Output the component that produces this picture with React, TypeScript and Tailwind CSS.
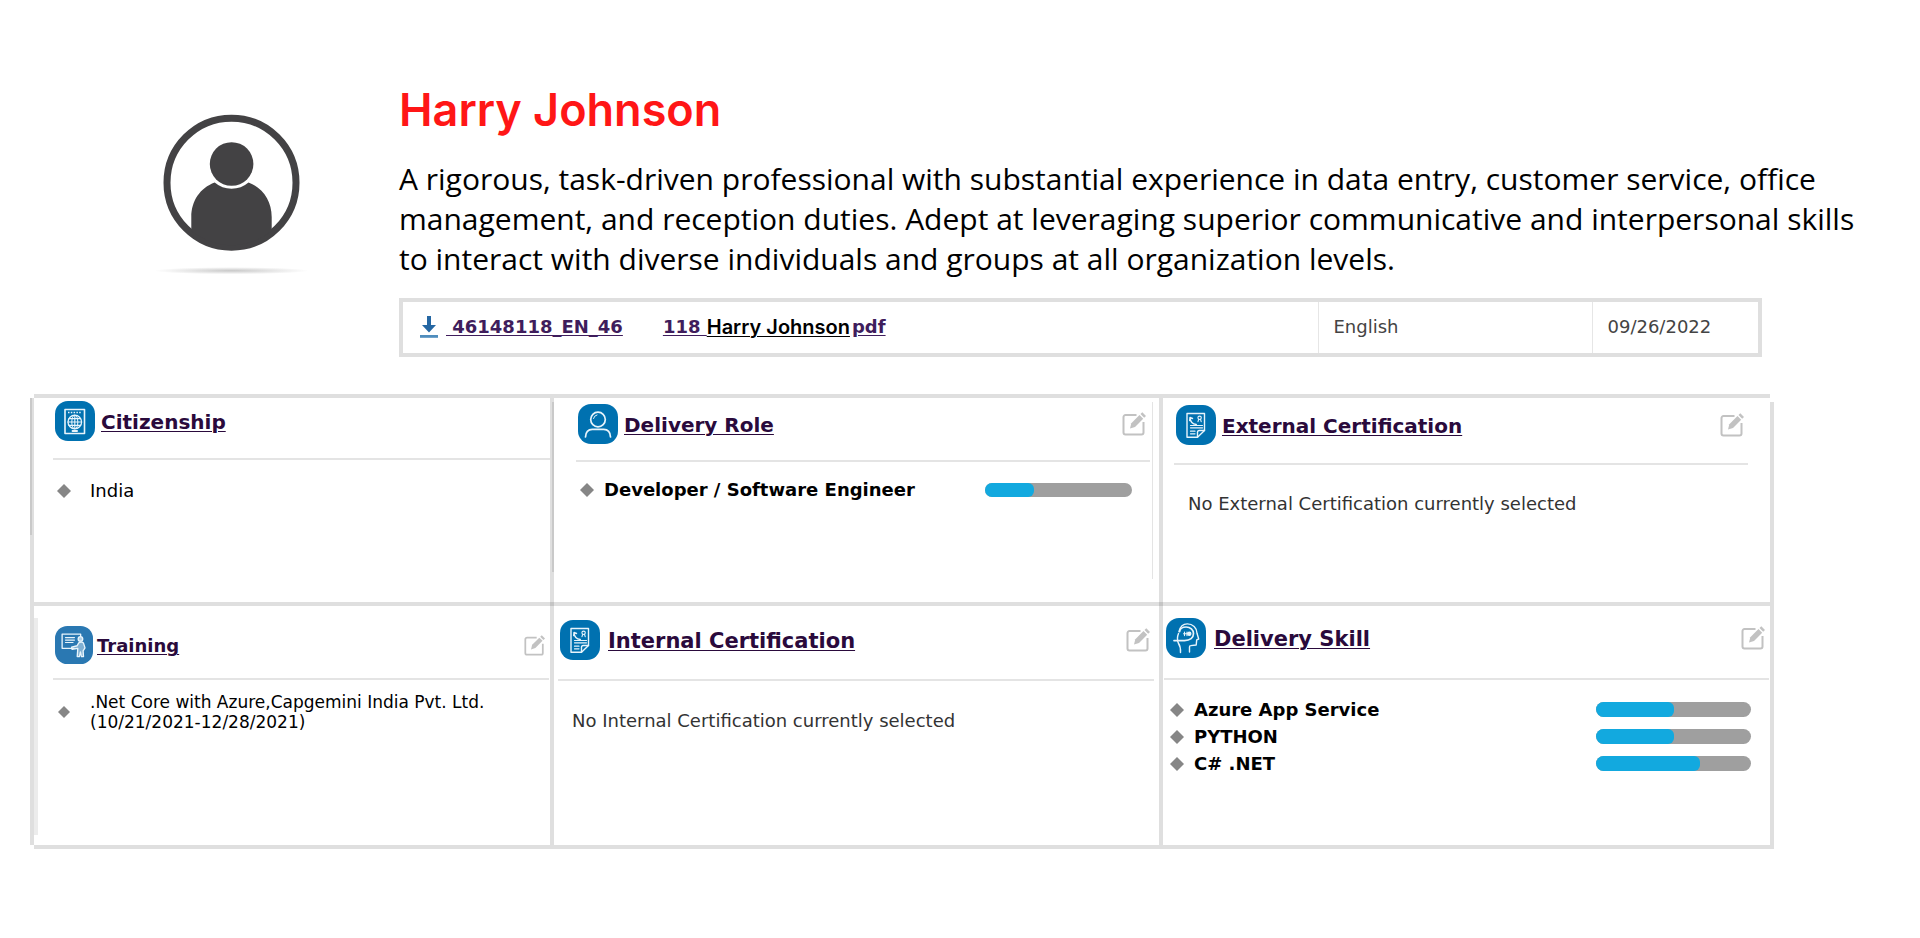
import type { ReactNode } from "react";

type Skill = { name: string; level: number };

function Badge({ light = false, children }: { light?: boolean; children: ReactNode }) {
  return (
    <svg
      viewBox="0 0 40 40"
      aria-hidden="true"
      className={light ? "size-[38px] shrink-0 text-[#2a78b2]" : "size-10 shrink-0 text-[#0071b0]"}
    >
      <rect width="40" height="40" rx="13" fill="currentColor" />
      <g fill="none" stroke="#e8f4fb" strokeWidth="1.4" strokeLinecap="round" strokeLinejoin="round">
        {children}
      </g>
    </svg>
  );
}

function PassportIcon() {
  return (
    <Badge>
      <rect x="10" y="8.5" width="19.5" height="24" strokeWidth="1.6" />
      <path d="M13 11.5h13.500" strokeWidth="1.6" strokeDasharray="1.500 1.300" strokeLinecap="butt" />
      <circle cx="19.800" cy="21" r="6.800" strokeWidth="1.300" />
      <ellipse cx="19.800" cy="21" rx="3" ry="6.800" strokeWidth="1.100" />
      <path d="M19.800 14.200v13.600M13 21h13.600M14 17.600h11.600M14 24.400h11.600" strokeWidth="1.100" />
      <path d="M17.500 30h4.600" strokeWidth="1.800" />
    </Badge>
  );
}

function PersonIcon() {
  return (
    <Badge>
      <circle cx="20" cy="15.500" r="7.300" strokeWidth="1.700" />
      <path d="M15.500 14.500a4.600 4.600 0 0 1 3.500-3.600" strokeWidth="1" />
      <path d="M7.500 33c.2-4.800 2.700-7.700 6.800-7.700h11.400c4.100 0 6.600 2.900 6.800 7.700" strokeWidth="1.700" />
    </Badge>
  );
}

function CertificateIcon() {
  return (
    <Badge>
      <path d="M11 8.500h17.500v17l-7 6.800H11z" />
      <path d="M28.500 25.500h-5.200a1.800 1.800 0 0 0-1.800 1.800v5" />
      <path d="M14 12.500c.3 4 2.600 6.700 6.300 7M14 12.500l-.3 3M14 12.500l2.500 1" />
      <circle cx="23.600" cy="12.800" r="1.700" strokeWidth="1.100" />
      <path d="M22.600 14.600l-.6 2M24.600 14.600l.6 2" strokeWidth="1.100" />
      <path d="M14.500 20.500h12M14.500 22.800h12M14.500 26.200h4.500M14.500 28.800h4.500" strokeWidth="1.200" />
    </Badge>
  );
}

function TrainingIcon() {
  return (
    <Badge light>
      <path d="M20 23.500H7.500V8.500H27V11" />
      <path d="M11 12.200h9.500M11 14.800h9.500M11 17.400h8" strokeWidth="1.200" />
      <circle cx="26.800" cy="13.600" r="2.400" fill="#e8f4fb" fillOpacity=".7" />
      <path
        d="M17.500 22.300l5.800-1.500 1.700-3c1.200-1.300 4.200-1.300 5 .2l1.600 5-2 3.200.4 6h-2.200l-1-5-1.200 5h-2.200l.6-8.700-6 1z"
        fill="#e8f4fb"
        fillOpacity=".45"
      />
    </Badge>
  );
}

function SkillIcon() {
  return (
    <Badge>
      <path d="M14.500 34.500c.2-3.500-.2-6.500-2.200-9.500-1.200-2.800-1-6.500.2-9.500" />
      <path d="M8 22.600h10.500c5.500 0 9-2.800 9-7 0-3.800-3.200-6.600-7.400-6.600-3.700 0-6.300 2-6.500 4.600" strokeWidth="1.700" />
      <path d="M13 13.500c1.300-5.300 4.500-7.600 8.300-7.600 5.500 0 9.500 4 9.700 9.300l1.700 5.800-2 .9-.5 5.100-5.500.6c-.8 0-1.200.7-1.200 1.500v5" />
      <path d="M17.500 15.800h5.500M18.500 14v3.600M21 14v3.600" strokeWidth="1.100" />
      <circle cx="23.300" cy="15.800" r="1.500" fill="#e8f4fb" />
    </Badge>
  );
}

function EditButton({ label, small = false }: { label: string; small?: boolean }) {
  return (
    <button type="button" aria-label={label} className="ml-auto shrink-0 text-[#c2c2c2]">
      <svg viewBox="0 0 24 24" className={small ? "size-[21px]" : "size-6"} fill="none">
        <path
          d="M14.500 3H3.500A2 2 0 0 0 1.500 5v15.500a2 2 0 0 0 2 2h16a2 2 0 0 0 2-2V10"
          stroke="currentColor"
          strokeWidth="2"
        />
        <path d="M8 16.500l1.300-5.300 8.200-8.200 3.700 3.700-8.200 8.200z" fill="currentColor" />
        <path d="M18.500 2L20.300.2 24 3.900l-1.800 1.800z" fill="currentColor" />
      </svg>
    </button>
  );
}

function Diamond({ small = false }: { small?: boolean }) {
  return (
    <svg viewBox="0 0 14 14" aria-hidden="true" className={small ? "mx-px size-3 shrink-0" : "size-3.5 shrink-0"}>
      <path d="M7 0l7 7-7 7-7-7z" fill="#868686" />
    </svg>
  );
}

function Level({ name, level, size }: Skill & { size: string }) {
  return (
    <div
      role="progressbar"
      aria-label={name}
      aria-valuenow={level}
      className={`ml-auto shrink-0 overflow-hidden rounded-full bg-[#9f9f9f] ${size}`}
    >
      <div className="h-full rounded-r-md bg-[#12a9df]" style={{ width: `${level}%` }} />
    </div>
  );
}

function Panel({
  title,
  icon,
  padding,
  header,
  titleSize = "text-[20px]",
  edit = true,
  smallEdit = false,
  children,
}: {
  title: string;
  icon: ReactNode;
  padding: string;
  header: string;
  titleSize?: string;
  edit?: boolean;
  smallEdit?: boolean;
  children: ReactNode;
}) {
  return (
    <section className={`relative bg-white ${padding}`}>
      <header className={`border-b-2 border-[#e4e4e4] pr-1 pl-0.5 ${header}`}>
        <div className="flex items-center">
          {icon}
          <h2 className={`pt-0.5 font-bold ${titleSize}`}>
            <a href="#" className="text-[#2a0a3c] underline decoration-1 underline-offset-2">
              {title}
            </a>
          </h2>
          {edit && <EditButton label={`Edit ${title}`} small={smallEdit} />}
        </div>
      </header>
      {children}
    </section>
  );
}

function Avatar() {
  return (
    <svg viewBox="0 0 160 165" className="h-[165px] w-40" role="img" aria-label="Profile picture">
      <defs>
        <radialGradient id="avatar-shadow">
          <stop offset="0" stopColor="#c9c9c9" />
          <stop offset="1" stopColor="#fff" />
        </radialGradient>
      </defs>
      <circle cx="79.500" cy="69.700" r="64.500" fill="none" stroke="#434244" strokeWidth="7" />
      <circle cx="79.600" cy="51" r="21.800" fill="#434244" />
      <path
        d="M39.300 118V104C39.300 88 48 75 62.700 69.500A26 26 0 0 0 96.500 69.500C111 75 119.700 88 119.700 104V118A64 64 0 0 1 39.300 118Z"
        fill="#434244"
      />
      <ellipse cx="79.500" cy="157.700" rx="77" ry="3.600" fill="url(#avatar-shadow)" />
    </svg>
  );
}

const skills: Skill[] = [
  { name: "Azure App Service", level: 50 },
  { name: "PYTHON", level: 50 },
  { name: "C# .NET", level: 67 },
];

export default function App() {
  return (
    <main className="min-h-screen bg-white pt-20 pb-20 font-['DejaVu_Sans',sans-serif] text-[18px] leading-6 text-black">
      <div className="flex pr-10">
        <div className="flex w-[399px] shrink-0 justify-end pt-[33px] pr-[87px]">
          <Avatar />
        </div>
        <div className="min-w-0 flex-1">
          <h1 className="font-['Inter',sans-serif] text-[45px] leading-[60px] font-semibold text-[#ff1616]">
            Harry Johnson
          </h1>
          <p className="mt-[19px] font-['Open_Sans',sans-serif] text-[30px] leading-10">
            A rigorous, task-driven professional with substantial experience in data entry, customer service, office
            management, and reception duties. Adept at leveraging superior communicative and interpersonal skills to
            interact with diverse individuals and groups at all organization levels.
          </p>
          <div className="mt-[19px] mr-[118px] border-4 border-[#dfdfdf]">
            <table className="w-full table-fixed text-left text-[#444]">
              <tbody>
                <tr className="h-[51px]">
                  <td className="pb-0.5 pl-[17px]">
                    <a href="#" className="flex items-center font-bold whitespace-nowrap text-[#3f1d5c]">
                      <svg viewBox="0 0 18 22" aria-hidden="true" className="h-[22px] w-[18px]">
                        <path d="M7 0h4v9h5l-7 7.500L2 9h5z" fill="#2567a3" />
                        <path d="M0 19h18v2.800H0z" fill="#4f8dbd" />
                      </svg>
                      <span className="ml-2 underline decoration-1 underline-offset-2">&nbsp;46148118_EN_46</span>
                      <span className="ml-10 underline decoration-1 underline-offset-2">118&nbsp;</span>
                      <span className="font-['Inter',sans-serif] text-[20px] font-semibold text-black underline decoration-1 underline-offset-2">
                        Harry Johnson
                      </span>
                      <span className="ml-0.5 underline decoration-1 underline-offset-2">pdf</span>
                    </a>
                  </td>
                  <td className="w-[274px] border-l border-[#e6e6e6] pb-0.5 pl-[15px]">English</td>
                  <td className="w-[166px] border-l border-[#e6e6e6] pb-0.5 pl-[15px]">09/26/2022</td>
                </tr>
              </tbody>
            </table>
          </div>
        </div>
      </div>

      <div className="relative mt-[37px] mr-[146px] ml-[30px] grid grid-cols-[516fr_605fr_607fr] grid-rows-[204px_239px] gap-1 bg-[#dfdfdf] p-1">
        <span className="absolute top-0 left-0 size-1 bg-white" />
        <span className="absolute top-0 right-0 h-2 w-1 bg-white" />
        <span className="absolute bottom-0 left-0 size-1 bg-white" />
        <span className="absolute top-1 left-0 h-[137px] w-0.5 bg-[#c9c9c9]" />

        <Panel
          title="Citizenship"
          icon={<PassportIcon />}
          padding="pl-[19px]"
          header="h-[62px] pt-[3px]"
          titleSize="pl-1.5 text-[20px]"
          edit={false}
        >
          <span className="absolute top-1 -right-1 h-[170px] w-0.5 bg-[#c9c9c9]" />
          <span className="absolute -right-1 -bottom-1 size-1 bg-[#c4c4c4]" />
          <ul className="pt-[17px] pl-1">
            <li className="flex h-[27px] items-center gap-[19px]">
              <Diamond />
              India
            </li>
          </ul>
        </Panel>

        <Panel
          title="Delivery Role"
          icon={<PersonIcon />}
          padding="pr-[9px] pl-[22px]"
          header="h-16 pt-1.5"
          titleSize="pl-1.5 text-[20px]"
        >
          <span className="absolute top-1 right-1.5 h-[177px] w-px bg-[#e4e4e4]" />
          <span className="absolute -right-1 -bottom-1 size-1 bg-[#c4c4c4]" />
          <ul className="pt-3.5 pr-[18px] pl-1">
            <li className="flex h-[27px] items-center gap-2.5 font-bold">
              <Diamond />
              Developer / Software Engineer
              <Level name="Developer / Software Engineer" level={33} size="h-3.5 w-[147px]" />
            </li>
          </ul>
        </Panel>

        <Panel
          title="External Certification"
          icon={<CertificateIcon />}
          padding="pr-[22px] pl-[11px]"
          header="h-[67px] pt-[7px]"
          titleSize="pl-1.5 text-[20px]"
        >
          <p className="pt-[27px] pl-3.5 text-[#333]">No External Certification currently selected</p>
        </Panel>

        <Panel
          title="Training"
          icon={<TrainingIcon />}
          padding="pr-px pl-[19px]"
          header="h-[74px] pt-5"
          titleSize="pl-1 text-[18px]"
          smallEdit
        >
          <span className="absolute top-3 left-0 h-[217px] w-1 bg-[#ececec]" />
          <ul className="pt-3 pl-1">
            <li className="flex items-center gap-[19px] text-[17px] leading-5">
              <Diamond small />
              <span>
                .Net Core with Azure,Capgemini India Pvt. Ltd.
                <br />
                (10/21/2021-12/28/2021)
              </span>
            </li>
          </ul>
        </Panel>

        <Panel
          title="Internal Certification"
          icon={<CertificateIcon />}
          padding="pr-[5px] pl-1"
          header="h-[75px] pt-3.5"
          titleSize="pl-2 text-[21px]"
        >
          <p className="pt-7 pl-3.5 text-[#333]">No Internal Certification currently selected</p>
        </Panel>

        <Panel
          title="Delivery Skill"
          icon={<SkillIcon />}
          padding="px-px"
          header="h-[74px] pt-3"
          titleSize="pl-2 text-[21px]"
        >
          <ul className="pt-4 pr-[18px] pl-1.5">
            {skills.map((skill) => (
              <li key={skill.name} className="flex h-[27px] items-center gap-2.5 font-bold">
                <Diamond />
                {skill.name}
                <Level {...skill} size="h-[15px] w-[155px]" />
              </li>
            ))}
          </ul>
        </Panel>
      </div>
    </main>
  );
}
